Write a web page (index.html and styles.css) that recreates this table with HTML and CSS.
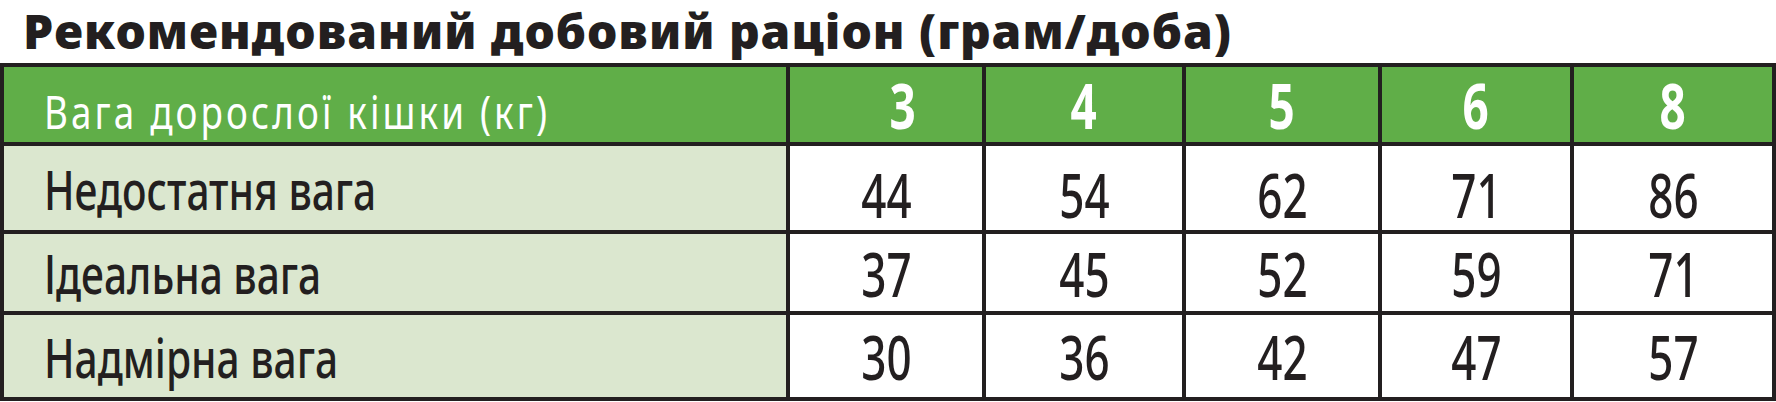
FILE: index.html
```html
<!DOCTYPE html>
<html lang="uk">
<head>
<meta charset="utf-8">
<title>Рекомендований добовий раціон</title>
<link rel="stylesheet" href="styles.css">
</head>
<body>
<div class="page">
  <h1 class="title">Рекомендований добовий раціон (грам/доба)</h1>
  <div class="ration">
    <div class="cell head label"><span class="t">Вага дорослої кішки (кг)</span></div>
    <div class="cell head num first"><span class="t">3</span></div>
    <div class="cell head num"><span class="t">4</span></div>
    <div class="cell head num"><span class="t">5</span></div>
    <div class="cell head num"><span class="t">6</span></div>
    <div class="cell head num"><span class="t">8</span></div>

    <div class="cell side"><span class="t">Недостатня вага</span></div>
    <div class="cell val top"><span class="t">44</span></div>
    <div class="cell val top"><span class="t">54</span></div>
    <div class="cell val top"><span class="t">62</span></div>
    <div class="cell val top"><span class="t">71</span></div>
    <div class="cell val top"><span class="t">86</span></div>

    <div class="cell side"><span class="t">Ідеальна вага</span></div>
    <div class="cell val"><span class="t">37</span></div>
    <div class="cell val"><span class="t">45</span></div>
    <div class="cell val"><span class="t">52</span></div>
    <div class="cell val"><span class="t">59</span></div>
    <div class="cell val"><span class="t">71</span></div>

    <div class="cell side"><span class="t">Надмірна вага</span></div>
    <div class="cell val"><span class="t">30</span></div>
    <div class="cell val"><span class="t">36</span></div>
    <div class="cell val"><span class="t">42</span></div>
    <div class="cell val"><span class="t">47</span></div>
    <div class="cell val"><span class="t">57</span></div>
  </div>
</div>
</body>
</html>
```
FILE: styles.css
```css
html, body {
  margin: 0;
  padding: 0;
  background: #ffffff;
}

.page {
  width: 1776px;
  font-family: "Noto Sans", "Liberation Sans", sans-serif;
  color: #231f20;
}

.title {
  margin: 0;
  height: 63px;
  padding-left: 23px;
  font-size: 48px;
  line-height: 62px;
  font-weight: 900;
  letter-spacing: 1px;
  white-space: nowrap;
}

.ration {
  display: grid;
  grid-template-columns: 782px 192px 196px 192px 188px 198px;
  grid-template-rows: 75px 84px 77px 82px;
  gap: 4px;
  padding: 4px;
  background: #231f20;
  width: 1776px;
  box-sizing: border-box;
}

.cell {
  display: flex;
  align-items: center;
  white-space: nowrap;
  background: #ffffff;
  box-sizing: border-box;
}

.t {
  display: inline-block;
}

.head {
  background: #60ae48;
  color: #ffffff;
}

.head.label {
  padding-left: 40px;
  padding-top: 12px;
  font-size: 46px;
  font-weight: 400;
  letter-spacing: 3.9px;
}

.head.label .t {
  transform: scaleX(0.8);
  transform-origin: left center;
}

.head.num {
  justify-content: center;
  font-size: 62px;
  font-weight: 700;
}

.head.num .t {
  transform: scaleX(0.74);
}

.head.num.first {
  padding-left: 34px;
}

.side {
  background: #dbe7cf;
  padding-left: 40px;
  font-size: 55px;
  font-weight: 500;
}

.side .t {
  transform: scaleX(0.74);
  transform-origin: left center;
}

.val {
  justify-content: center;
  font-size: 62px;
  font-weight: 500;
}

.val .t {
  transform: scaleX(0.71);
}

.val.top {
  padding-top: 12px;
}
```
